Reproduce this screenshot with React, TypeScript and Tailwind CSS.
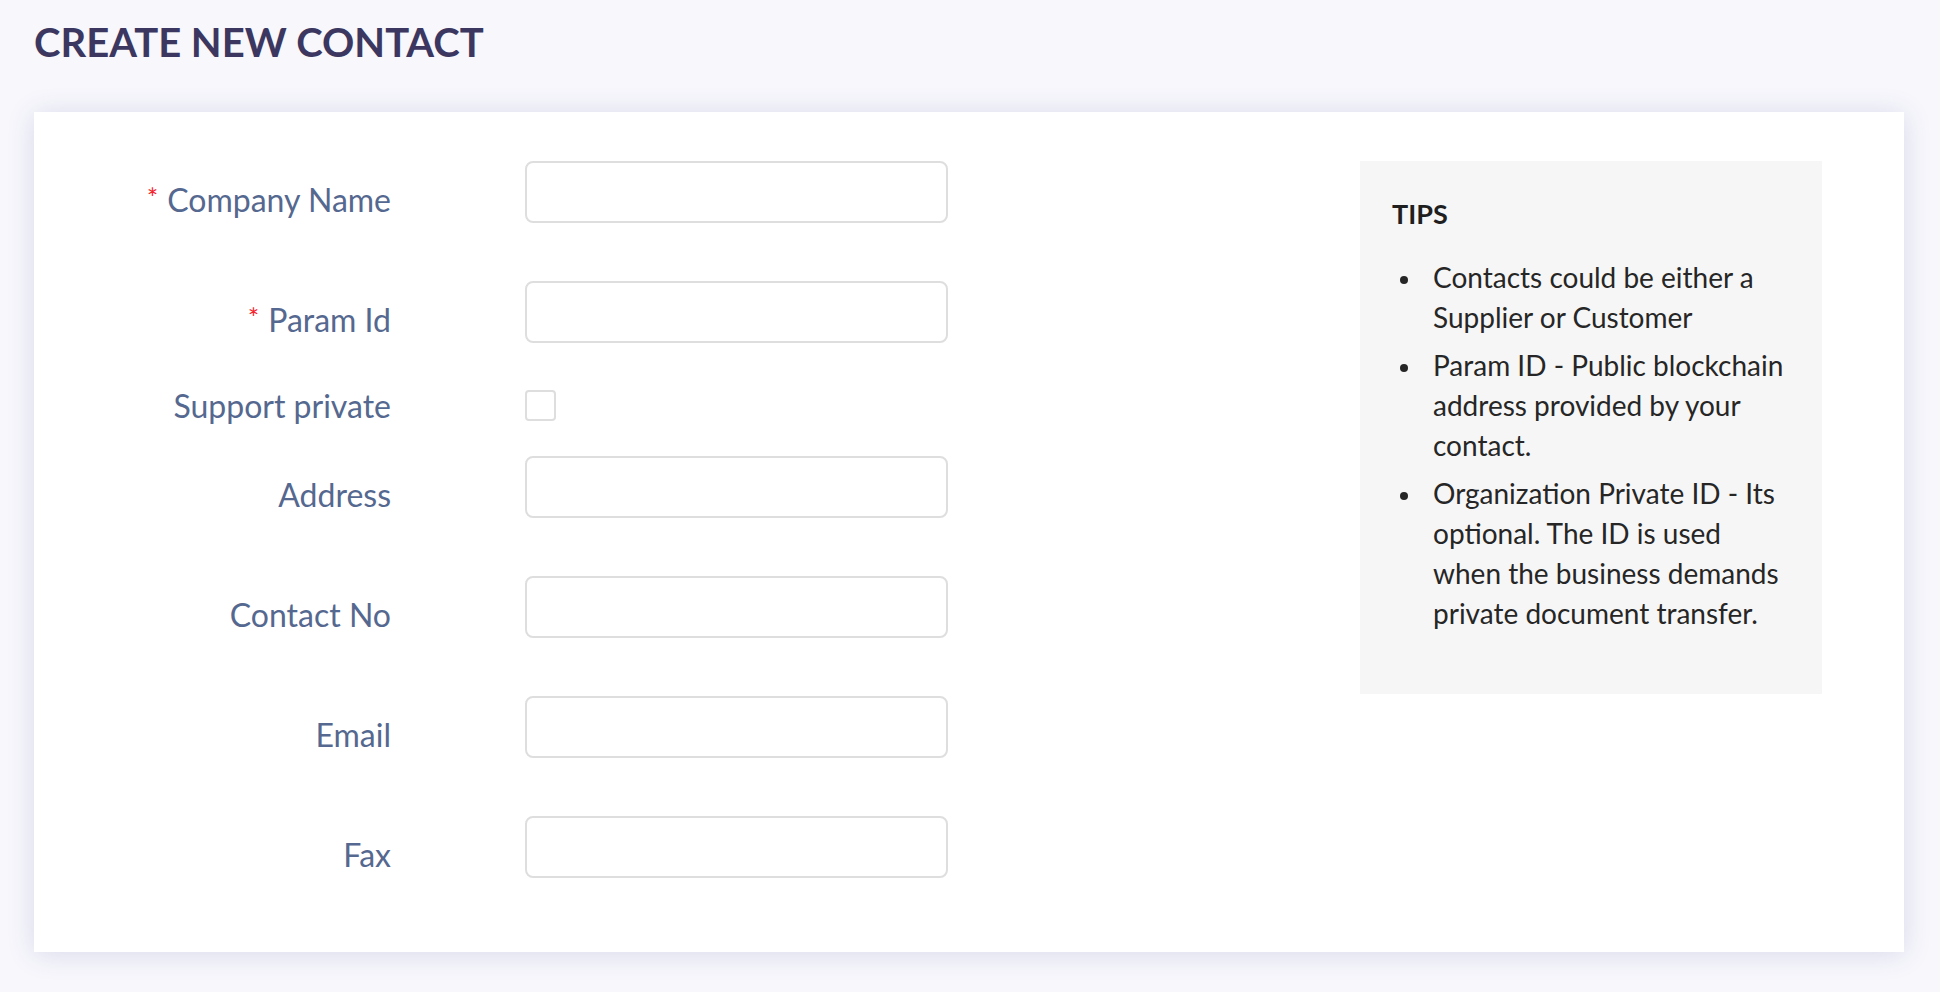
import React from 'react';

const fields = [
  { label: 'Company Name', required: true },
  { label: 'Param Id', required: true },
];

const moreFields = ['Address', 'Contact No', 'Email', 'Fax'];

const tips = [
  'Contacts could be either a Supplier or Customer',
  'Param ID - Public blockchain address provided by your contact.',
  'Organization Private ID - Its optional. The ID is used when the business demands private document transfer.',
];

const Label = ({ text, required }: { text: string; required?: boolean }) => (
  <div className="w-[357px] shrink-0 text-right text-[32px] leading-[38px] text-[#55688f]">
    {required && <span className="mr-[9px] align-top text-[27px] leading-[34px] text-[#f5222d]">*</span>}
    {text}
  </div>
);

const InputRow = ({ text, required }: { text: string; required?: boolean }) => (
  <div className="flex h-[62px] items-start">
    <div className="pt-[20px]">
      <Label text={text} required={required} />
    </div>
    <input
      type="text"
      className="ml-[134px] h-[62px] w-[423px] rounded-[8px] border-2 border-[#dedede] bg-white outline-none"
    />
  </div>
);

export default function App() {
  return (
    <div className="min-h-screen bg-[#f7f7fc] px-[34px] pt-[16px] pb-[40px] font-['Lato',sans-serif]">
      <h1 className="text-[40px] font-bold leading-[52px] text-[#3c3760]">CREATE NEW CONTACT</h1>

      <div className="mt-[44px] flex h-[840px] w-[1870px] bg-white pt-[49px] shadow-[0_2px_26px_rgba(70,70,150,0.16)]">
        <div className="flex flex-col">
          <div className="flex flex-col gap-[58px]">
            {fields.map((f) => (
              <InputRow key={f.label} text={f.label} required={f.required} />
            ))}
          </div>

          <div className="mt-[44px] flex h-[38px] items-start">
            <Label text="Support private" />
            <input
              type="checkbox"
              className="ml-[134px] mt-[3px] h-[31px] w-[31px] appearance-none rounded-[4px] border-2 border-[#dedede] bg-white"
            />
          </div>

          <div className="mt-[31px] flex flex-col gap-[58px]">
            {moreFields.map((f) => (
              <InputRow key={f} text={f} />
            ))}
          </div>
        </div>

        <div className="ml-[412px] h-[533px] w-[462px] bg-[#f6f6f6] pl-[32px] pr-[28px] pt-[36px]">
          <h3 className="text-[27px] font-bold leading-[34px] text-[#1f1f1f]">TIPS</h3>
          <ul className="mt-[26px] flex flex-col gap-[8px] text-[28px] leading-[40px] text-[#262626]">
            {tips.map((t) => (
              <li key={t} className="flex items-start">
                <span className="ml-[8px] mt-[19px] h-[8px] w-[8px] shrink-0 rounded-full bg-[#262626]" />
                <span className="ml-[25px]">{t}</span>
              </li>
            ))}
          </ul>
        </div>
      </div>
    </div>
  );
}
